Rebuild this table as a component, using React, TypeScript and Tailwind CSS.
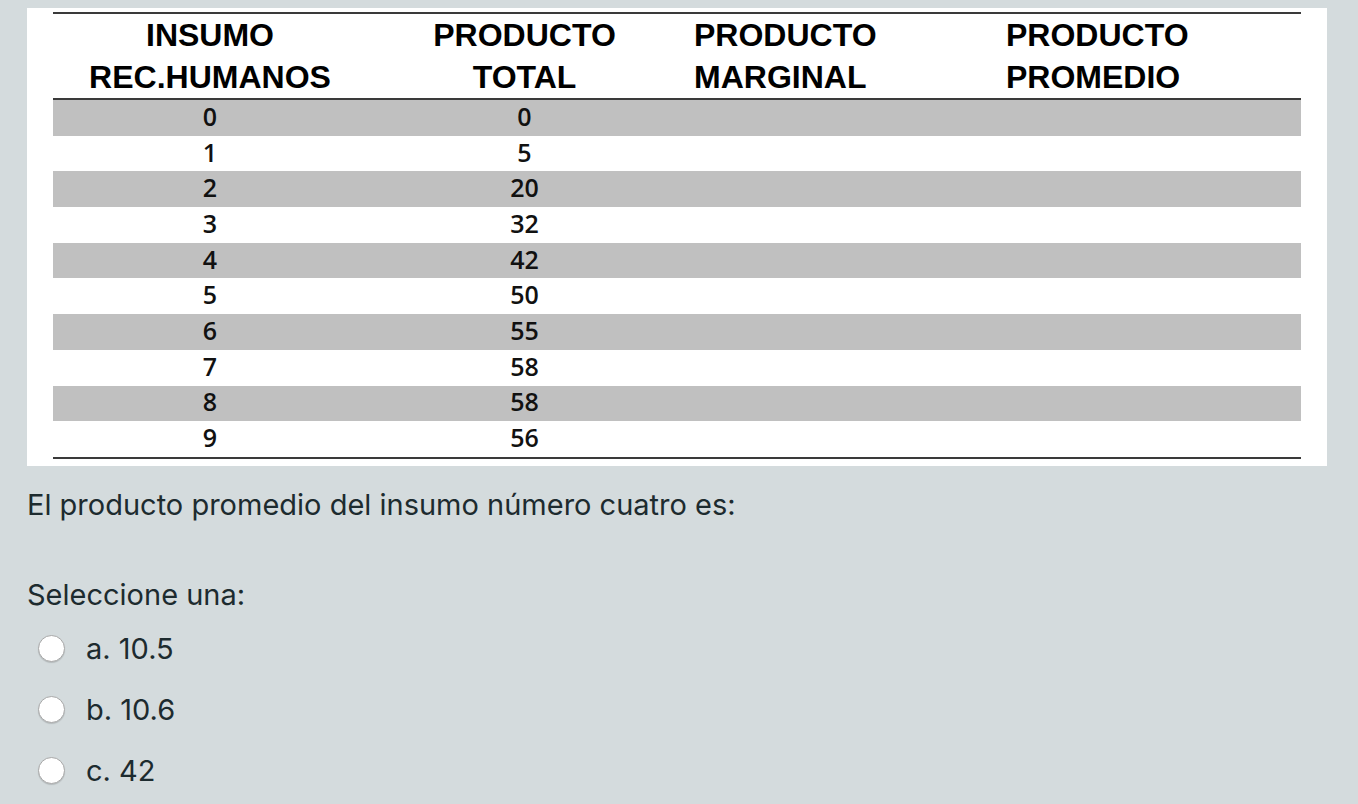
import React from "react";

const rows: [string, string][] = [
  ["0", "0"],
  ["1", "5"],
  ["2", "20"],
  ["3", "32"],
  ["4", "42"],
  ["5", "50"],
  ["6", "55"],
  ["7", "58"],
  ["8", "58"],
  ["9", "56"],
];

const opts = ["a. 10.5", "b. 10.6", "c. 42"];

export default function App() {
  return (
    <div
      className="min-h-screen w-full bg-[#d4dbdd] pt-[8px] pl-[27px] text-[#1d2b2f]"
      style={{ fontFamily: "Inter, 'Liberation Sans', sans-serif" }}
    >
      <div className="w-[1300px] h-[458px] bg-white pl-[26px] pt-[4px]">
        <div className="w-[1248px] border-t-2 border-b-2 border-[#3a3a3a]">
          <div
            className="flex h-[86px] border-b-2 border-[#3a3a3a] text-black font-bold text-[32px] leading-[42px] pb-[2px]"
            style={{ fontFamily: "'Liberation Sans', Arial, sans-serif" }}
          >
            <div className="w-[314px] flex flex-col items-center">
              <span>INSUMO</span>
              <span>REC.HUMANOS</span>
            </div>
            <div className="w-[315px] flex flex-col items-center">
              <span>PRODUCTO</span>
              <span>TOTAL</span>
            </div>
            <div className="w-[312px] flex flex-col pl-[12px]">
              <span>PRODUCTO</span>
              <span>MARGINAL</span>
            </div>
            <div className="flex-1 flex flex-col pl-[12px]">
              <span>PRODUCTO</span>
              <span>PROMEDIO</span>
            </div>
          </div>
          {rows.map(([a, b], i) => (
            <div
              key={i}
              className={`flex h-[35.7px] items-center text-[25px] font-semibold text-[#111] leading-none ${
                i % 2 === 0 ? "bg-[#c0c0c0]" : "bg-white"
              }`}
              style={{ fontFamily: "'Open Sans', sans-serif" }}
            >
              <div className="w-[314px] text-center pb-[3px]">{a}</div>
              <div className="w-[315px] text-center pb-[3px]">{b}</div>
              <div className="flex-1" />
            </div>
          ))}
        </div>
      </div>
      <p className="mt-[21px] text-[29px] leading-[36px]">
        El producto promedio del insumo número cuatro es:
      </p>
      <p className="mt-[54px] text-[29px] leading-[36px]">Seleccione una:</p>
      <div className="mt-[5px] flex flex-col">
        {opts.map((o) => (
          <div key={o} className="flex items-center h-[61px]">
            <span className="ml-[11px] w-[27px] h-[27px] rounded-full bg-white border border-[#a8a8a8] shadow-[0_1px_1px_rgba(0,0,0,0.15)]" />
            <span className="ml-[21px] text-[29px] leading-[36px]">{o}</span>
          </div>
        ))}
      </div>
    </div>
  );
}
